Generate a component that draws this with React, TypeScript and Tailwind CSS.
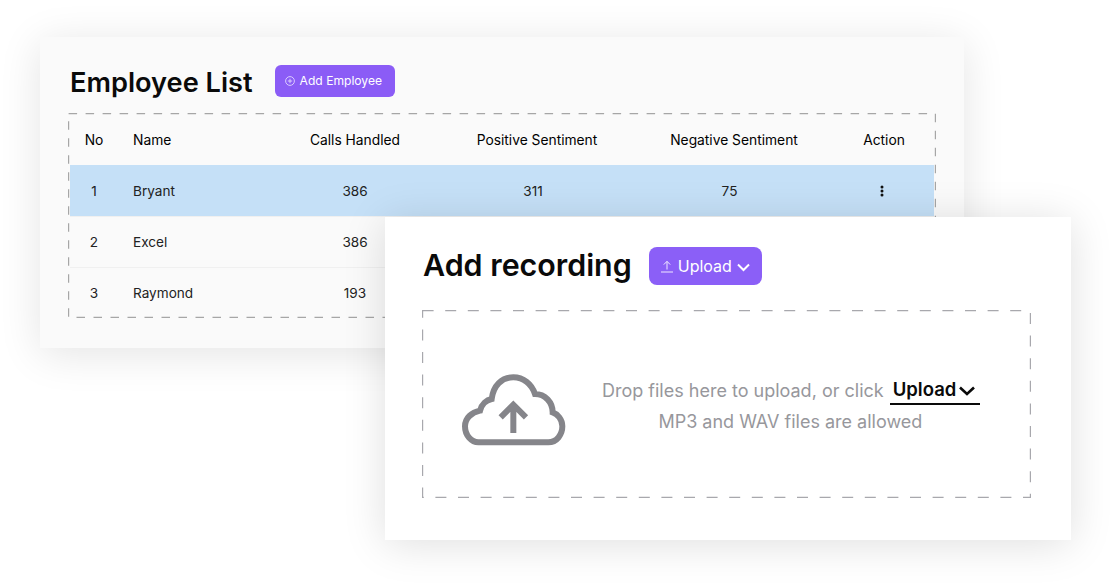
import React from "react";

function Dashed({ w, h, dash, gap, color }: { w: number; h: number; dash: number; gap: number; color: string }) {
  return (
    <svg className="absolute left-0 top-0 pointer-events-none" width={w} height={h} viewBox={`0 0 ${w} ${h}`} fill="none">
      <rect x="0.6" y="0.6" width={w - 1.2} height={h - 1.2} stroke={color} strokeWidth="1.2" strokeDasharray={`${dash} ${gap}`} />
    </svg>
  );
}

const rows = [
  { no: "1", name: "Bryant", calls: "386", pos: "311", neg: "75", active: true },
  { no: "2", name: "Excel", calls: "386", pos: "", neg: "", active: false },
  { no: "3", name: "Raymond", calls: "193", pos: "", neg: "", active: false },
];

function Row({ r }: { r: (typeof rows)[number] }) {
  return (
    <div className={`flex items-center h-[51px] text-[13.6px] text-[#222] ${r.active ? "bg-[#c5e0f7] pt-[1px]" : "border-t border-[#f0f0f0]"}`}>
      <div className="w-[48px] text-center">{r.no}</div>
      <div className="w-[152px] pl-[15px]">{r.name}</div>
      <div className="w-[170px] text-center">{r.calls}</div>
      <div className="w-[194px] text-center pr-[8px]">{r.pos}</div>
      <div className="w-[200px] text-center pr-[9px]">{r.neg}</div>
      <div className="w-[100px] flex justify-center pr-[4px]">
        {r.active && (
          <svg width="4" height="12" viewBox="0 0 4 12" fill="#111">
            <circle cx="2" cy="2" r="1.5" />
            <circle cx="2" cy="6" r="1.5" />
            <circle cx="2" cy="10" r="1.5" />
          </svg>
        )}
      </div>
    </div>
  );
}

export default function App() {
  return (
    <div className="relative w-[1111px] h-[584px] overflow-hidden bg-white font-['Inter',sans-serif]">
      <div className="ml-[40px] mt-[37px] inline-block align-top w-[924px] h-[311px] bg-[#fafafa] shadow-[0_6px_40px_rgba(0,0,0,0.11)] px-[28px] pt-[28px]">
        <div className="flex items-center gap-[22px] pl-[2px] h-[32px]">
          <h1 className="text-[27.2px] leading-[32px] font-semibold text-[#0a0a0a] mt-[3px]">Employee List</h1>
          <button className="flex items-center gap-[5px] h-[32px] w-[120px] pl-[10px] rounded-[6px] bg-[#8b5cf6] text-white text-[12.1px]">
            <svg width="10" height="10" viewBox="0 0 10 10" fill="none" stroke="#ede6ff" strokeWidth="0.8">
              <circle cx="5" cy="5" r="4.4" />
              <path d="M5 2.8v4.4M2.8 5h4.4" />
            </svg>
            Add Employee
          </button>
        </div>
        <div className="relative mt-[16px] w-[868px] h-[205px] pl-[2px] pt-[1px] pr-[2px]">
          <div className="flex items-center h-[51px] pt-[2px] text-[13.8px] font-normal text-black">
            <div className="w-[48px] text-center">No</div>
            <div className="w-[152px] pl-[15px]">Name</div>
            <div className="w-[170px] text-center">Calls Handled</div>
            <div className="w-[194px] text-center">Positive Sentiment</div>
            <div className="w-[200px] text-center">Negative Sentiment</div>
            <div className="w-[100px] text-center">Action</div>
          </div>
          {rows.map((r) => (
            <Row key={r.no} r={r} />
          ))}
          <Dashed w={868} h={205} dash={8.5} gap={8.5} color="#a6a6a6" />
        </div>
      </div>

      <div className="absolute left-[385px] top-[217px] w-[686px] h-[323px] bg-white shadow-[0_4px_40px_rgba(0,0,0,0.13)] pl-[37px] pt-[30px]">
        <div className="flex items-center h-[38px]">
          <h2 className="ml-[1px] mr-[17px] mb-[2px] text-[30.4px] leading-[38px] font-semibold text-[#0a0a0a]">Add recording</h2>
          <button className="flex items-center h-[38px] w-[113px] pl-[12px] rounded-[8px] bg-[#8b5fF7] text-white text-[16px]">
            <svg width="12" height="13" viewBox="0 0 12 13" fill="none" stroke="#efe8ff" strokeWidth="1" className="mr-[5px]">
              <path d="M6 9.5V1.5M2.8 4.6 6 1.3l3.2 3.3M0 12h12" />
            </svg>
            Upload
            <svg width="13" height="9" viewBox="0 0 13 9" fill="none" stroke="#fff" strokeWidth="2" className="ml-[5px] mt-[2px]">
              <path d="M1 1.5 6.5 7 12 1.5" />
            </svg>
          </button>
        </div>
        <div className="relative mt-[25px] w-[609px] h-[188px] flex items-center">
          <svg className="ml-[38px] mt-[13px] shrink-0" width="110" height="74" viewBox="60 40 330 222" fill="none" stroke="#85858a" strokeWidth="18">
            <path d="M115 245H325C350 245 367 222 367 197C367 175 352 160 338 155C338 125 315 100 285 100C275 70 250 50 220 50C185 50 160 75 155 115C140 118 125 130 120 150C95 155 75 172 75 197C75 225 95 245 115 245Z" />
            <path d="M220 217V132M182 170 220 132 258 170" />
          </svg>
          <div className="ml-[32px] flex flex-col items-center text-[18px] text-[#97979c]">
            <div className="flex items-center h-[28px] mt-[4px]">
              <span>Drop files here to upload, or click</span>
              <span className="ml-[6px] w-[90px] h-[28px] pl-[3px] flex items-center border-b-2 border-[#0a0a0a] font-semibold text-[18.5px] text-[#0a0a0a]">
                Upload
                <svg width="16" height="10" viewBox="0 0 16 10" fill="none" stroke="#0a0a0a" strokeWidth="2.6" className="ml-[3px] mt-[2px]">
                  <path d="M1 1.5 8 8l7-6.5" />
                </svg>
              </span>
            </div>
            <div className="mt-[3px] leading-[28px] pr-[1px]">MP3 and WAV files are allowed</div>
          </div>
          <Dashed w={609} h={188} dash={11} gap={11.6} color="#a8a8ad" />
        </div>
      </div>
    </div>
  );
}
